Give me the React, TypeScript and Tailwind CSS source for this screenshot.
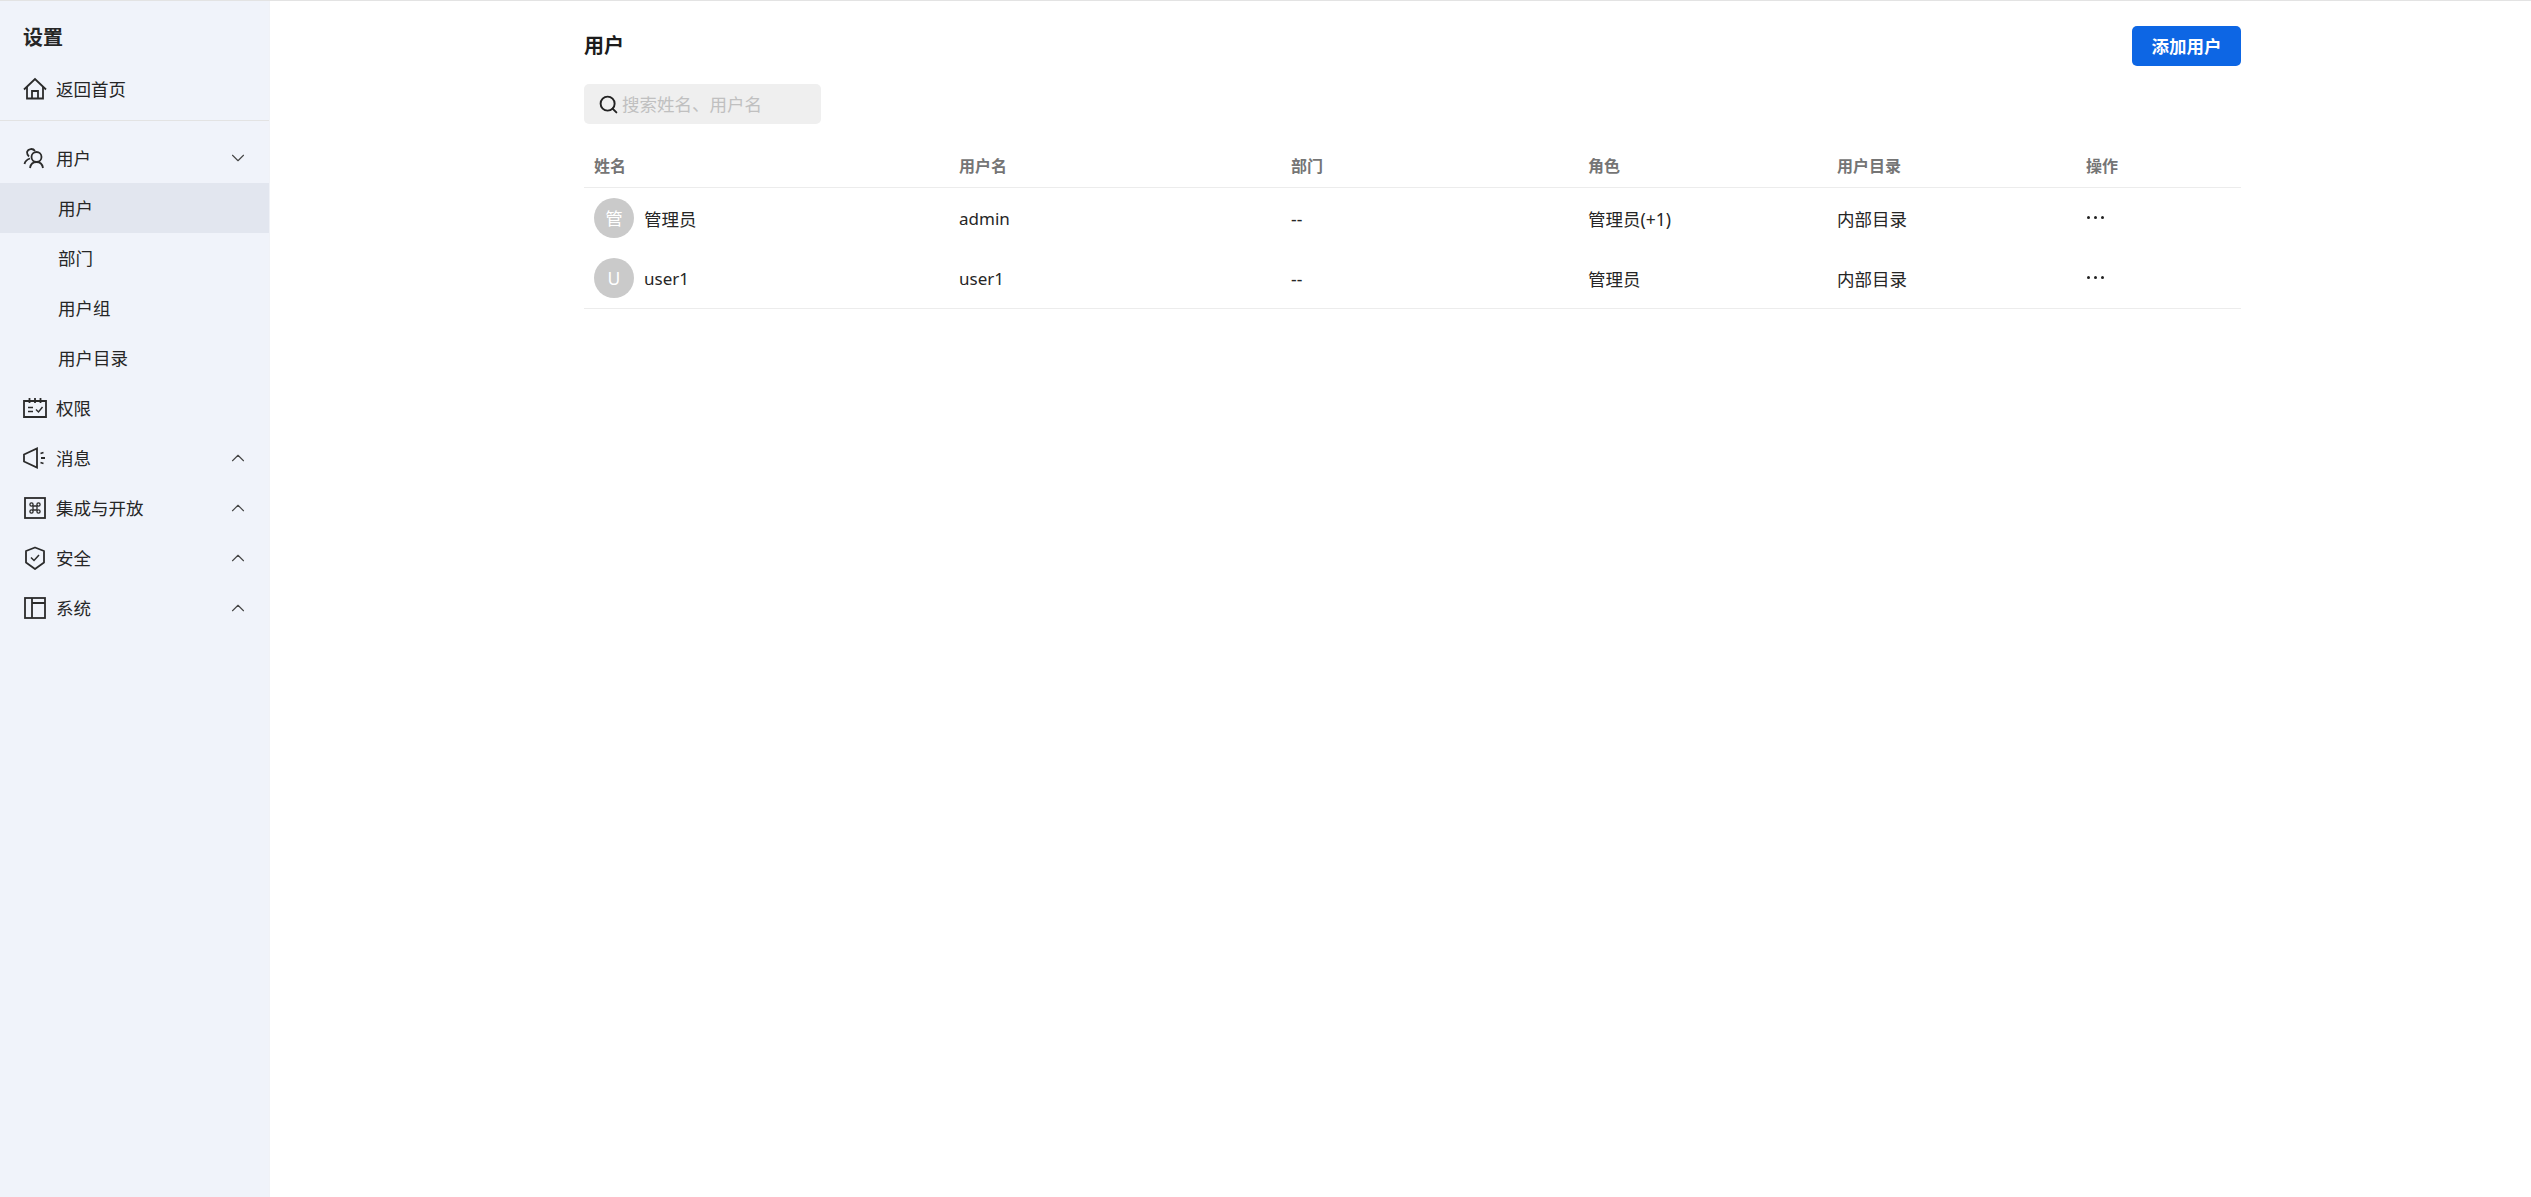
import { ReactNode } from 'react';
import { ChevronDown, ChevronUp, Search } from 'lucide-react';

const FONT = "font-['Noto_Sans','Noto_Sans_CJK_SC',sans-serif]";

const iconProps = {
    width: 24,
    height: 24,
    viewBox: '0 0 24 24',
    fill: 'none',
    stroke: '#2b2b2b',
    strokeWidth: 1.8,
} as const;

const HomeIcon = () => (
    <svg {...iconProps}>
        <path d="M1 12.5 12 2l11 10.5" />
        <path d="M4 10v11.5h16V10" />
        <path d="M9 21.5V14h6v7.5" />
    </svg>
);

const UsersIcon = () => (
    <svg {...iconProps}>
        <circle cx="13.5" cy="11" r="5" />
        <path d="M7 22c.6-3.800 3-6 6.500-6s5.900 2.200 6.500 6" />
        <path d="M12 5A4.500 4.500 0 0 0 4 6c0 2 .8 3.500 2 4.500" />
        <path d="M7 12.500C4 13.500 2 15.500 1.500 18" />
    </svg>
);

const PermissionIcon = () => (
    <svg {...iconProps}>
        <path d="M1 5h22v16H1z" />
        <path d="M6.500 2v5M12 2v5M17.500 2v5" />
        <path d="M5 11.500h5M5 15.500h5" strokeWidth="1.400" />
        <path d="m13 13.500 2.500 2.500 4-5" strokeWidth="1.400" />
    </svg>
);

const MessageIcon = () => (
    <svg {...iconProps}>
        <path d="M1 8.500 14 2.500v19L1 15.500z" />
        <path d="m17.500 7.500 3-1M18 12h4M17.500 16.500l3 1" />
    </svg>
);

const IntegrationIcon = () => (
    <svg {...iconProps}>
        <rect x="2" y="2" width="20" height="20" />
        <path d="M10 10h4v4h-4z" strokeWidth="1.300" />
        <circle cx="8.500" cy="8.500" r="1.600" strokeWidth="1.300" />
        <circle cx="15.500" cy="8.500" r="1.600" strokeWidth="1.300" />
        <circle cx="8.500" cy="15.500" r="1.600" strokeWidth="1.300" />
        <circle cx="15.500" cy="15.500" r="1.600" strokeWidth="1.300" />
    </svg>
);

const ShieldIcon = () => (
    <svg {...iconProps}>
        <path d="M12 1.500 21 5v11.500L12 23l-9-6.500V5z" strokeLinejoin="round" />
        <path d="m8 11.500 3 3 5-5.500" strokeWidth="1.500" />
    </svg>
);

const SystemIcon = () => (
    <svg {...iconProps}>
        <rect x="2" y="2" width="20" height="20" />
        <path d="M9 2v20M9 7h13" />
    </svg>
);

function NavRow({ icon, label, chevron }: { icon: ReactNode; label: string; chevron?: 'up' | 'down' }) {
    return (
        <div className="h-[50px] pl-[23px] pr-[20px] flex items-center text-[17.5px] text-[#262626]">
            <span className="w-[24px] h-[24px] shrink-0">{icon}</span>
            <span className="ml-[9px] flex-1">{label}</span>
            {chevron === 'down' && <ChevronDown className="w-[22px] h-[22px] text-[#444]" strokeWidth={1.2} />}
            {chevron === 'up' && <ChevronUp className="w-[22px] h-[22px] text-[#444]" strokeWidth={1.2} />}
        </div>
    );
}

function SubRow({ label, active }: { label: string; active?: boolean }) {
    return (
        <div className={`h-[50px] pl-[58px] flex items-center text-[17.5px] text-[#262626] ${active ? 'bg-[#e2e6ef]' : ''}`}>
            {label}
        </div>
    );
}

const GRID = 'grid grid-cols-[365px_332px_297px_249px_249px_1fr] pl-[10px]';

const users = [
    { avatar: '管', name: '管理员', username: 'admin', role: '管理员(+1)', nameClass: '' },
    { avatar: 'U', name: 'user1', username: 'user1', role: '管理员', nameClass: 'text-[17px]' },
];

export default function App() {
    return (
        <div className={`h-[1197px] flex flex-col overflow-hidden bg-white ${FONT}`}>
            <div className="h-px bg-[#e3e3e3] shrink-0" />
            <div className="flex flex-1 min-h-0">
                <aside className="w-[270px] shrink-0 bg-[#f0f3fa] border-r border-[#f0f2f7]">
                    <div className="h-[63px] pl-[23px] pt-[21px] text-[20px] leading-[32px] font-bold text-[#262626]">设置</div>
                    <NavRow icon={<HomeIcon />} label="返回首页" />
                    <div className="h-px mt-[6px] mb-[12px] bg-[#e3e3e3]" />
                    <NavRow icon={<UsersIcon />} label="用户" chevron="down" />
                    <SubRow label="用户" active />
                    <SubRow label="部门" />
                    <SubRow label="用户组" />
                    <SubRow label="用户目录" />
                    <NavRow icon={<PermissionIcon />} label="权限" />
                    <NavRow icon={<MessageIcon />} label="消息" chevron="up" />
                    <NavRow icon={<IntegrationIcon />} label="集成与开放" chevron="up" />
                    <NavRow icon={<ShieldIcon />} label="安全" chevron="up" />
                    <NavRow icon={<SystemIcon />} label="系统" chevron="up" />
                </aside>

                <main className="w-[1657px] ml-[314px]">
                    <div className="h-[40px] mt-[25px] flex items-center justify-between">
                        <h1 className="text-[20px] font-bold text-[#1c1c1c]">用户</h1>
                        <button className="w-[109px] h-[40px] rounded-[5px] bg-[#0d66e4] text-white text-[17.5px] font-bold">添加用户</button>
                    </div>

                    <div className="w-[237px] h-[40px] mt-[18px] rounded-[5px] bg-[#efefef] flex items-center pl-[14px]">
                        <Search className="w-[21px] h-[21px] text-[#222] shrink-0" strokeWidth={2.2} />
                        <input
                            placeholder="搜索姓名、用户名"
                            className="ml-[3px] w-[190px] bg-transparent outline-none text-[17.5px] placeholder:text-[#c0c0c0]"
                        />
                    </div>

                    <div className={`${GRID} h-[64px] items-center border-b border-[#ececec] text-[16px] font-semibold text-[#757575] pt-[21px]`}>
                        <div>姓名</div>
                        <div>用户名</div>
                        <div>部门</div>
                        <div>角色</div>
                        <div>用户目录</div>
                        <div>操作</div>
                    </div>

                    <div className="border-b border-[#ececec]">
                        {users.map((u) => (
                            <div key={u.username} className={`${GRID} h-[60px] items-center text-[17.5px] text-[#262626]`}>
                                <div className="flex items-center">
                                    <span className="w-[40px] h-[40px] rounded-full bg-[#cacaca] text-white flex items-center justify-center">{u.avatar}</span>
                                    <span className={`ml-[10px] pt-[2px] ${u.nameClass}`}>{u.name}</span>
                                </div>
                                <div className="pt-[2px] text-[17px]">{u.username}</div>
                                <div className="pt-[2px]">--</div>
                                <div className="pt-[2px]">{u.role}</div>
                                <div className="pt-[2px]">内部目录</div>
                                <div className="flex gap-[4px] pb-[2px] ml-[1px]">
                                    <span className="w-[3px] h-[3px] rounded-full bg-[#222]" />
                                    <span className="w-[3px] h-[3px] rounded-full bg-[#222]" />
                                    <span className="w-[3px] h-[3px] rounded-full bg-[#222]" />
                                </div>
                            </div>
                        ))}
                    </div>
                </main>
            </div>
        </div>
    );
}
